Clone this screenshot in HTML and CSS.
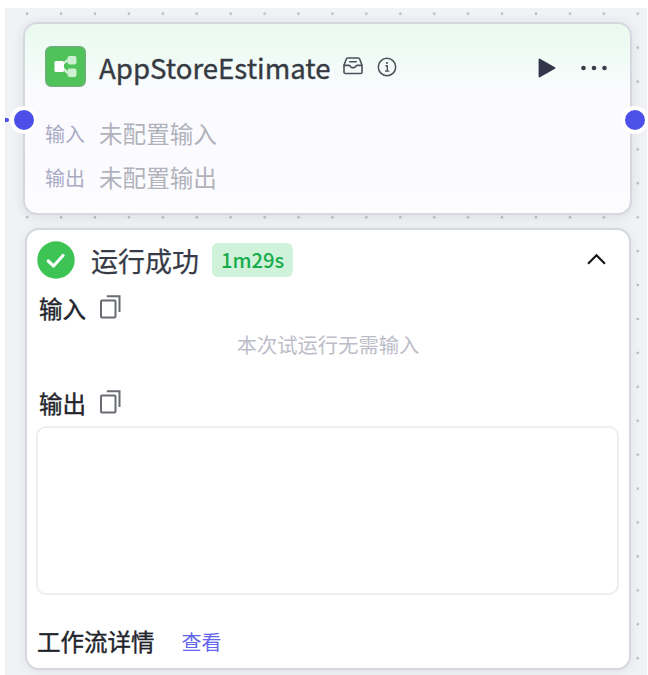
FILE: index.html
```html
<!DOCTYPE html>
<html lang="zh-CN">
<head>
<meta charset="utf-8">
<title>AppStoreEstimate</title>
<link rel="stylesheet" href="styles.css">
</head>
<body>
<main class="canvas">
  <section class="node">
    <span class="edge"></span>
    <span class="port port-in"></span>
    <span class="port port-out"></span>
    <header class="node-head">
      <svg class="logo" viewBox="0 0 41 41">
        <rect x=".75" y=".75" width="39.5" height="39.5" rx="5.5" fill="#4fc25a" stroke="#6daf78" stroke-width="1.5"/>
        <path d="M18 18 22 14.5H25M18 22 22 26.5H25" fill="none" stroke="#dcf5df" stroke-width="2"/>
        <rect x="9.5" y="15" width="9.5" height="11" rx="1.5" fill="#fff"/>
        <rect x="22.5" y="10" width="9" height="8.5" rx="2" fill="#cdf0d1"/>
        <rect x="22.5" y="22.5" width="9" height="8.5" rx="2" fill="#cdf0d1"/>
      </svg>
      <h1 class="node-title">AppStoreEstimate</h1>
      <svg class="icon-box" viewBox="0 0 20 18">
        <g fill="none" stroke="#4b515a" stroke-width="1.6" stroke-linejoin="round" stroke-linecap="round">
          <path d="M1 8.3 3.2 2.2Q3.6 1 4.8 1H15.2Q16.4 1 16.8 2.2L19 8.3V15.2Q19 16.5 17.7 16.5H2.3Q1 16.5 1 15.2Z"/>
          <path d="M1.2 8.4H5.8Q7 8.4 7.4 9.4 8 10.6 9 10.6H11Q12 10.6 12.6 9.4 13 8.4 14.2 8.4H18.8M6.8 4.8H13.2"/>
        </g>
      </svg>
      <svg class="icon-info" viewBox="0 0 20 20">
        <circle cx="10" cy="10" r="8.7" fill="none" stroke="#4b515a" stroke-width="1.5"/>
        <circle cx="10" cy="6" r="1.1" fill="#4b515a"/>
        <path d="M8.5 8.8H10.3V14M8 14.1H12.3" fill="none" stroke="#4b515a" stroke-width="1.4"/>
      </svg>
      <svg class="icon-play" viewBox="0 0 18 20">
        <path d="M1.5 1.5V18.5L16.5 10Z" fill="#32364a" stroke="#32364a" stroke-width="1.8" stroke-linejoin="round"/>
      </svg>
      <svg class="icon-more" viewBox="0 0 28 6">
        <g fill="#393d48"><circle cx="3.5" cy="3" r="2.3"/><circle cx="14" cy="3" r="2.3"/><circle cx="24.5" cy="3" r="2.3"/></g>
      </svg>
    </header>
    <dl class="params">
      <dt>输入</dt><dd>未配置输入</dd>
      <dt>输出</dt><dd>未配置输出</dd>
    </dl>
  </section>

  <section class="result">
    <header class="status">
      <svg class="icon-check" viewBox="0 0 38 38">
        <circle cx="19" cy="19" r="18.7" fill="#3ec455"/>
        <path d="M11.2 20 16.6 25 26 14.5" fill="none" stroke="#fff" stroke-width="3.1" stroke-linecap="round" stroke-linejoin="round"/>
      </svg>
      <span class="status-text">运行成功</span>
      <span class="duration">1m29s</span>
      <svg class="icon-up" viewBox="0 0 18 11"><path d="M1 10 9 2 17 10" fill="none" stroke="#16171b" stroke-width="2.1"/></svg>
    </header>
    <div class="label-row">
      <span class="label">输入</span>
      <svg class="icon-copy" viewBox="0 0 22 24"><g fill="none" stroke="#686b71" stroke-width="2"><rect x="2" y="5.5" width="14.5" height="17" rx="1"/><path d="M7.8 1.3H20.5V17"/></g></svg>
    </div>
    <p class="empty">本次试运行无需输入</p>
    <div class="label-row">
      <span class="label">输出</span>
      <svg class="icon-copy" viewBox="0 0 22 24"><g fill="none" stroke="#686b71" stroke-width="2"><rect x="2" y="5.5" width="14.5" height="17" rx="1"/><path d="M7.8 1.3H20.5V17"/></g></svg>
    </div>
    <div class="output"></div>
    <footer class="details">
      <span class="label">工作流详情</span>
      <a class="view">查看</a>
    </footer>
  </section>
</main>
</body>
</html>
```
FILE: styles.css
```css
* { box-sizing: border-box; margin: 0; padding: 0; }

body {
  width: 648px;
  height: 675px;
  padding: 8px 1px 0 5px;
  overflow: hidden;
  background: #fff;
  font-family: "Noto Sans CJK SC", sans-serif;
}

svg { display: block; flex: none; }

.canvas {
  height: 667px;
  padding: 14px 15px 0 18px;
  overflow: hidden;
  background-color: #f1f2f5;
  background-image: radial-gradient(circle at center, #b4b6bc 0.8px, transparent 1.7px);
  background-size: 33.93px 33.93px;
  background-position: 5.2px -11.3px;
}

.node {
  position: relative;
  width: 609px;
  height: 193px;
  padding: 22px 22px 0 20px;
  border: 2px solid #d6d8e0;
  border-radius: 14px;
  background: linear-gradient(#e9faf0 0, #f1fbf6 36px, #fbfbff 68px, #fcfcff 100%) padding-box;
  box-shadow: 0 2px 12px rgba(30, 35, 60, .1);
}

.port {
  position: absolute;
  top: 82px;
  width: 28px;
  height: 28px;
  border: 4px solid #fff;
  border-radius: 50%;
  background: #4c50e8;
}
.port-in { left: -15px; }
.port-out { right: -18.6px; }

.edge {
  position: absolute;
  top: 94px;
  left: -21px;
  width: 5px;
  height: 4px;
  border-radius: 0 2px 2px 0;
  background: #4c50e8;
}

.node-head { display: flex; align-items: center; height: 41px; }
.logo { width: 41px; height: 41px; }
.node-title {
  width: 232px;
  margin: 2px 0 0 13px;
  color: #363a43;
  font-size: 27.6px;
  font-weight: 400;
  line-height: 41px;
  white-space: nowrap;
  -webkit-text-stroke: .35px currentColor;
}
.icon-box { width: 20px; height: 18px; margin: 0 0 1px 12px; }
.icon-info { width: 20px; height: 20px; margin: 0 0 0 14px; }
.icon-play { width: 18px; height: 20px; margin: 3px 0 0 auto; }
.icon-more { width: 28px; height: 6px; margin: 2px 0 0 24px; }

.params {
  display: grid;
  grid-template-columns: 54px 1fr;
  grid-auto-rows: 44px;
  align-items: center;
  margin-top: 24px;
}
.params dt { color: #a9abc4; font-size: 20px; }
.params dd { color: #b1b2bb; font-size: 23.6px; }

.result {
  position: relative;
  width: 606px;
  height: 442px;
  margin: 13px 0 0 2px;
  padding: 0 10px;
  border: 2px solid #d6d8e0;
  border-radius: 14px;
  background: #fff;
  box-shadow: 0 2px 10px rgba(30, 35, 60, .08);
}

.status { display: flex; align-items: center; height: 60px; }
.icon-check { width: 38px; height: 38px; }
.status-text {
  margin: 2px 0 0 16px;
  color: #373b47;
  font-size: 27px;
  line-height: 40px;
  -webkit-text-stroke: .25px currentColor;
}
.duration {
  width: 81px;
  height: 34px;
  margin-left: 13px;
  border-radius: 6px;
  background: #d0f2da;
  color: #18ac4b;
  font-size: 20.2px;
  font-weight: 500;
  line-height: 34px;
  text-align: center;
}
.icon-up { width: 19px; height: 12px; margin: -3px 13px 0 auto; }

.label-row { display: flex; align-items: center; height: 36px; padding-left: 2px; }
.label {
  color: #22242c;
  font-size: 23.5px;
  line-height: 36px;
  -webkit-text-stroke: .4px currentColor;
}
.icon-copy { width: 22px; height: 24px; margin: -2px 0 0 13px; }
.empty {
  height: 59px;
  color: #bcbdc9;
  font-size: 20.3px;
  line-height: 36px;
  text-align: center;
}
.output {
  width: 583px;
  height: 169px;
  margin: 5px 0 0 -1px;
  border: 2px solid #eeeeef;
  border-radius: 10px;
}
.details { display: flex; align-items: center; height: 36px; margin-top: 28px; }
.view { margin-left: 27px; color: #6265ea; font-size: 20px; }
```
